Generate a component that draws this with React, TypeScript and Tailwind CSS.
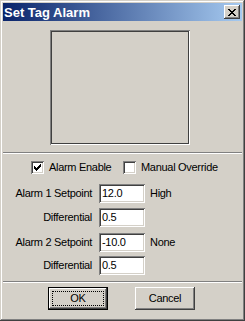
import React from "react";

const font = { fontFamily: '"Liberation Sans", Arial, sans-serif' };

function PixelGlyph({ rows, color = "#000" }: { rows: string[]; color?: string }) {
  const w = rows[0].length;
  const h = rows.length;
  const rects: React.ReactElement[] = [];
  rows.forEach((r, y) =>
    r.split("").forEach((c, x) => {
      if (c === "X") rects.push(<rect key={`${x}-${y}`} x={x} y={y} width={1} height={1} fill={color} />);
    })
  );
  return (
    <svg width={w} height={h} viewBox={`0 0 ${w} ${h}`} shapeRendering="crispEdges">
      {rects}
    </svg>
  );
}

const closeX = ["XX....XX", ".XX..XX.", "..XXXX..", "...XX...", "..XXXX..", ".XX..XX.", "XX....XX"];
const check = ["......X", ".....XX", "X...XXX", "XX.XXX.", "XXXXX..", ".XXX...", "..X...."];

const txt = "text-[11px] leading-none text-black tracking-[-0.3px]";

function Checkbox({ checked }: { checked: boolean }) {
  return (
    <div className="w-[13px] h-[13px] bg-white shadow-[inset_1px_1px_#808080,inset_-1px_-1px_#ffffff,inset_2px_2px_#404040,inset_-2px_-2px_#d4d0c8] flex items-center justify-center shrink-0">
      {checked && <PixelGlyph rows={check} />}
    </div>
  );
}

function Field({ label, value, extra, mt }: { label: string; value: string; extra?: string; mt: string }) {
  return (
    <div className={`flex items-center h-[19px] ${mt}`}>
      <div className={`w-[90px] text-right pr-[1px] ${txt}`}>{label}</div>
      <div className={`ml-[6px] w-[46px] h-[19px] bg-white shadow-[inset_1px_1px_#808080,inset_-1px_-1px_#ffffff,inset_2px_2px_#404040,inset_-2px_-2px_#d4d0c8] flex items-center pl-[3px] ${txt}`}>
        {value}
      </div>
      {extra && <div className={`ml-[5px] ${txt}`}>{extra}</div>}
    </div>
  );
}

function Separator({ mt }: { mt: string }) {
  return (
    <div className={`${mt} w-full`}>
      <div className="h-px bg-[#808080]" />
      <div className="h-px bg-white" />
    </div>
  );
}

export default function App() {
  return (
    <div
      className="w-[245px] h-[321px] bg-[#d4d0c8] p-[3px] flex flex-col shadow-[inset_-1px_-1px_#404040,inset_1px_1px_#d4d0c8,inset_-2px_-2px_#808080,inset_2px_2px_#ffffff]"
      style={font}
    >
      <div className="h-[18px] bg-[linear-gradient(to_right,#0a246a,#a6caf0)] flex items-center justify-between pl-[1px] pr-[2px]">
        <span className="text-white font-bold text-[13px] leading-none">Set Tag Alarm</span>
        <div className="w-[16px] h-[14px] bg-[#d4d0c8] flex items-center justify-center shadow-[inset_-1px_-1px_#404040,inset_1px_1px_#ffffff,inset_-2px_-2px_#808080]">
          <PixelGlyph rows={closeX} />
        </div>
      </div>

      <div className="flex flex-col">
        <div className="mt-[9px] ml-[47px] w-[140px] h-[115px] shadow-[inset_1px_1px_#808080,inset_-1px_-1px_#ffffff,inset_2px_2px_#404040,inset_-2px_-2px_#404040]" />

        <Separator mt="mt-[7px]" />

        <div className="mt-[7px] flex items-center h-[13px]">
          <div className="ml-[28px] w-[92px] flex items-center">
            <Checkbox checked />
            <span className={`ml-[5px] ${txt}`}>Alarm Enable</span>
          </div>
          <div className="flex items-center">
            <Checkbox checked={false} />
            <span className={`ml-[5px] ${txt}`}>Manual Override</span>
          </div>
        </div>

        <Field label="Alarm 1 Setpoint" value="12.0" extra="High" mt="mt-[10px]" />
        <Field label="Differential" value="0.5" mt="mt-[5px]" />
        <Field label="Alarm 2 Setpoint" value="-10.0" extra="None" mt="mt-[6px]" />
        <Field label="Differential" value="0.5" mt="mt-[4px]" />

        <Separator mt="mt-[6px]" />

        <div className="mt-[4px] flex">
          <div className="ml-[45px] w-[60px] h-[23px] border border-black bg-[#d4d0c8] shadow-[inset_-1px_-1px_#404040,inset_1px_1px_#ffffff,inset_-2px_-2px_#808080] p-[3px]">
            <div className={`w-full h-full border border-dotted border-black flex items-center justify-center ${txt}`}>
              OK
            </div>
          </div>
          <div className={`ml-[27px] w-[60px] h-[23px] bg-[#d4d0c8] shadow-[inset_-1px_-1px_#404040,inset_1px_1px_#ffffff,inset_-2px_-2px_#808080] flex items-center justify-center ${txt}`}>
            Cancel
          </div>
        </div>
      </div>
    </div>
  );
}
